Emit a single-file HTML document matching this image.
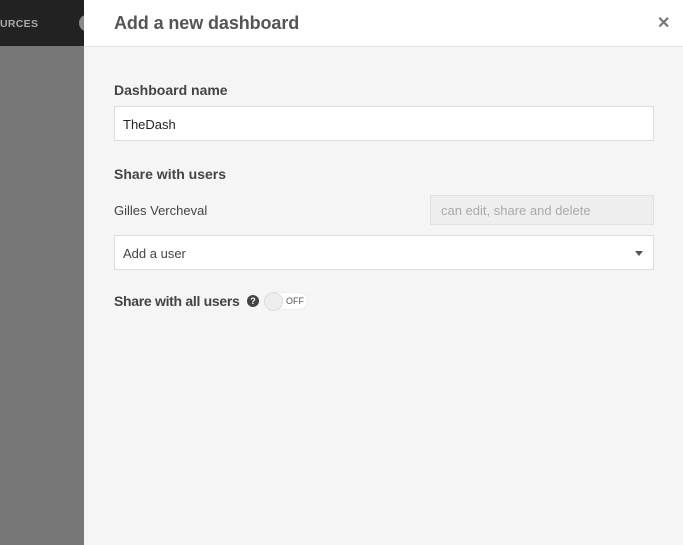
<!DOCTYPE html>
<html><head><style>
*{margin:0;padding:0;box-sizing:border-box}
body{width:683px;height:545px;overflow:hidden;position:relative;font-family:"Liberation Sans",sans-serif;background:#777}
.top{position:absolute;left:0;top:0;width:84px;height:46px;background:#222}
.top span{position:absolute;left:0;top:18px;font-size:10.5px;font-weight:bold;color:#aaa;letter-spacing:.3px}
.top i{position:absolute;left:79px;top:15px;width:14px;height:16px;border-radius:50%;background:#888}
.panel{position:absolute;left:84px;top:0;width:599px;height:545px;background:#f5f5f5}
.hd{height:47px;background:#fff;border-bottom:1px solid #e3e3e3;position:relative}
.hd h1{position:absolute;left:30px;top:13px;font-size:18px;font-weight:bold;color:#555;letter-spacing:-.1px}
.x{position:absolute;left:573px;top:13px;font-size:16px;font-weight:bold;color:#777}
.lbl{position:absolute;left:30px;font-size:14px;font-weight:bold;color:#444}
.inp{position:absolute;left:30px;width:540px;height:35px;background:#fff;border:1px solid #ddd;font-size:13px;color:#222;padding:10px 8px}
</style></head><body>
<div class="top"><span>URCES</span><i></i></div>
<div class="panel">
<div class="hd"><h1>Add a new dashboard</h1><div class="x">✕</div></div>
<div class="lbl" style="top:82px">Dashboard name</div>
<div class="inp" style="top:106px">TheDash</div>
<div class="lbl" style="top:166px">Share with users</div>
<div style="position:absolute;left:30px;top:203px;font-size:13px;color:#444">Gilles Vercheval</div>
<div style="position:absolute;left:346px;top:195px;width:224px;height:30px;background:#eee;border:1px solid #e0e0e0;font-size:13px;color:#aaa;padding:7px 10px">can edit, share and delete</div>
<div class="inp" style="top:235px;color:#444">Add a user<span style="position:absolute;right:10px;top:15px;border-left:4px solid transparent;border-right:4px solid transparent;border-top:5px solid #555"></span></div>
<div class="lbl" style="top:293px;letter-spacing:-.3px">Share with all users</div>
<div style="position:absolute;left:163px;top:295px;width:12px;height:12px;border-radius:50%;background:#444;color:#fff;font-size:9px;font-weight:bold;text-align:center;line-height:12px">?</div>
<div style="position:absolute;left:180px;top:292px;width:44px;height:18px;border-radius:9px;background:#fff;border:1px solid #eee"></div>
<div style="position:absolute;left:180px;top:292px;width:19px;height:19px;border-radius:50%;background:#eee;border:1px solid #ddd"></div>
<div style="position:absolute;left:202px;top:296px;font-size:9px;color:#555">OFF</div>
</div>
</body></html>
